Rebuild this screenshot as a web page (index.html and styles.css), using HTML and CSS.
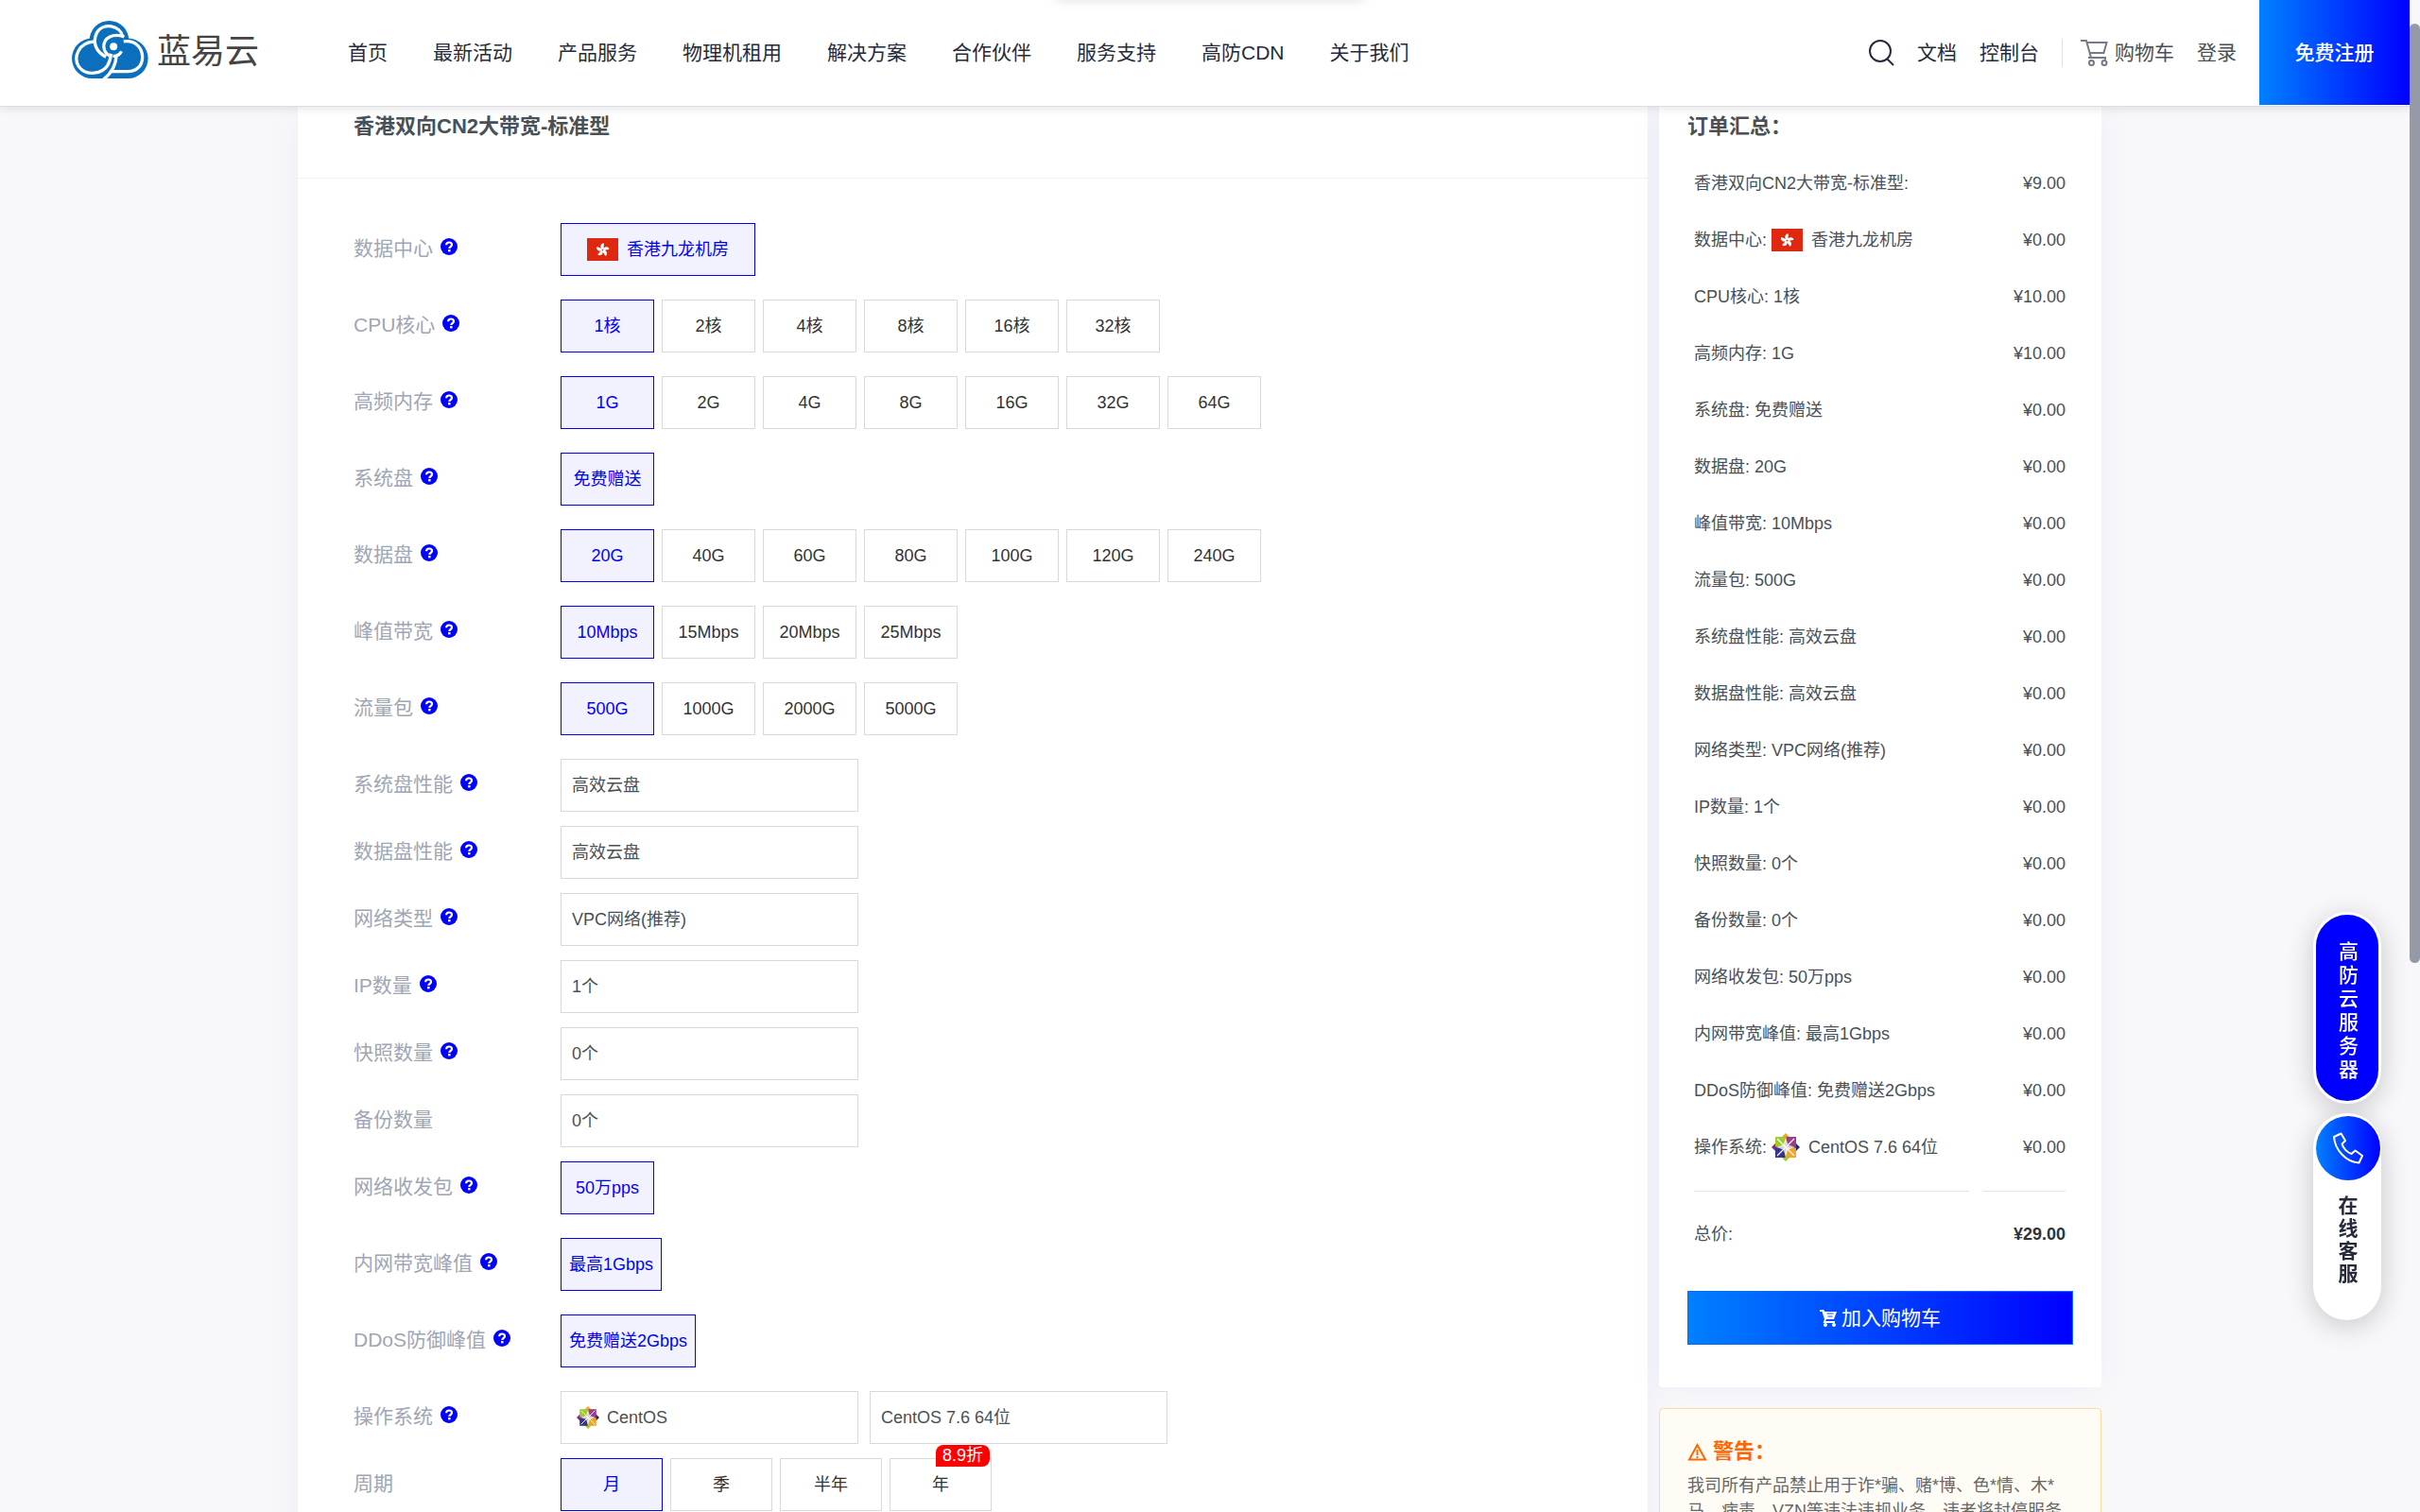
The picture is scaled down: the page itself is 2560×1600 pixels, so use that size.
FILE: index.html
```html
<!DOCTYPE html>
<html lang="zh-CN">
<head>
<meta charset="utf-8">
<title>香港双向CN2大带宽-标准型 - 蓝易云</title>
<link rel="stylesheet" href="styles.css">
</head>
<body>
<svg class="sprite" aria-hidden="true">
  <symbol id="help" viewBox="0 0 18 18">
    <circle cx="9" cy="9" r="9" fill="#0000ff"/>
    <path d="M6.100 7.300C6.100 5.300 7.300 4.500 9 4.500s3 .9 3 2.500c0 2-2.700 2-2.700 4" fill="none" stroke="#fff" stroke-width="2.200"/>
    <rect x="8.100" y="12" width="2.400" height="2.400" fill="#fff"/>
  </symbol>
  <symbol id="flag" viewBox="0 0 33 24">
    <rect width="33" height="24" fill="#de2910"/>
    <g fill="#fff" transform="translate(16.500 12.500)">
      <path id="petal" d="M0-.5C-3-2-3-6 .8-7.200C2.400-5.500 .4-4.500 1.400-2.500C1.600-1.500 1-.8 0-.5Z"/>
      <use href="#petal" transform="rotate(72)"/>
      <use href="#petal" transform="rotate(144)"/>
      <use href="#petal" transform="rotate(216)"/>
      <use href="#petal" transform="rotate(288)"/>
    </g>
  </symbol>
  <symbol id="centos" viewBox="0 0 30 30">
    <path d="M15 0l4 4v11h-8V4z" fill="#efa724"/>
    <path d="M30 15l-4 4H15v-8h11z" fill="#262577"/>
    <path d="M15 30l-4-4V15h8v11z" fill="#9ccd2a"/>
    <path d="M0 15l4-4h11v8H4z" fill="#932279"/>
    <path d="M4 4h10.500v10.500H4z" fill="#9ccd2a"/>
    <path d="M15.500 4H26v10.500H15.500z" fill="#a03a8c"/>
    <path d="M4 15.500h10.500V26H4z" fill="#35348a"/>
    <path d="M15.500 15.500H26V26H15.500z" fill="#efa724"/>
    <path d="M6 6l18 18M24 6L6 24" stroke="#fff" stroke-width="1.200"/>
    <path d="M15 5l2.500 7.500L25 15l-7.500 2.500L15 25l-2.500-7.500L5 15l7.500-2.500z" fill="#fff" opacity=".75"/>
  </symbol>
</svg>

<header class="header">
  <a class="logo" href="#">
    <svg width="81" height="61" viewBox="48 35 244 184" aria-hidden="true">
      <g fill="#0b6fbe">
        <circle cx="167" cy="98" r="63"/>
        <circle cx="112" cy="155" r="64"/>
        <circle cx="227" cy="155" r="64"/>
        <path d="M112 110h115v109H112z"/>
      </g>
      <g fill="none" stroke="#fff" stroke-width="10">
        <path d="M210 86C203 50 148 38 127 74c-15 32 0 62 30 76"/>
        <path d="M118 102C72 104 50 150 70 181c24 34 76 22 92-4 8-14 10-24 11-40"/>
        <path d="M213 101c40-6 60 24 60 50 0 30-22 46-46 46h-58"/>
        <path d="M215 86c-35-12-66 2-65 32 1 13 7 22 17 28"/>
        <path d="M206 132c-6 12-14 16-27 16M190 146c-2 34-16 56-41 76"/>
      </g>
      <circle cx="181" cy="117" r="25" fill="#0b6fbe"/>
      <circle cx="181" cy="117" r="12" fill="#fff"/>
    </svg>
    <span>蓝易云</span>
  </a>
  <nav class="nav">
    <a href="#">首页</a><a href="#">最新活动</a><a href="#">产品服务</a><a href="#">物理机租用</a><a href="#">解决方案</a><a href="#">合作伙伴</a><a href="#">服务支持</a><a href="#">高防CDN</a><a href="#">关于我们</a>
  </nav>
  <div class="tools">
    <button class="search" type="button" aria-label="搜索">
      <svg width="27" height="28" viewBox="0 0 27 28" fill="none" stroke="#252b3a" stroke-width="2"><circle cx="12" cy="12" r="11"/><path d="M19.500 20.500l6.500 6.500"/></svg>
    </button>
    <a href="#">文档</a>
    <a href="#">控制台</a>
  </div>
  <div class="account">
    <a class="cart" href="#">
      <svg width="29" height="29" viewBox="0 0 29 29" fill="none" stroke="#757a85" stroke-width="2"><path d="M0 2h6l5 18h15M7 4h20.500l-3 11H10M8 20h18v2"/><circle cx="11.500" cy="25.500" r="2.500"/><circle cx="25" cy="25.500" r="2.500"/></svg>
      购物车
    </a>
    <a href="#">登录</a>
  </div>
  <a class="register" href="#">免费注册</a>
</header>

<main class="layout">
  <section class="config">
    <h1 class="heading config-head">香港双向CN2大带宽-标准型</h1>
    <form class="form">
      <div class="row" role="radiogroup" aria-label="数据中心">
        <span class="name">数据中心<svg class="help"><use href="#help"/></svg></span>
        <div class="options">
          <label class="opt opt-site"><input type="radio" name="dc" checked><svg class="flag"><use href="#flag"/></svg>香港九龙机房</label>
        </div>
      </div>
      <div class="row" role="radiogroup" aria-label="CPU核心">
        <span class="name">CPU核心<svg class="help"><use href="#help"/></svg></span>
        <div class="options">
          <label class="opt"><input type="radio" name="cpu" checked>1核</label>
          <label class="opt"><input type="radio" name="cpu">2核</label>
          <label class="opt"><input type="radio" name="cpu">4核</label>
          <label class="opt"><input type="radio" name="cpu">8核</label>
          <label class="opt"><input type="radio" name="cpu">16核</label>
          <label class="opt"><input type="radio" name="cpu">32核</label>
        </div>
      </div>
      <div class="row" role="radiogroup" aria-label="高频内存">
        <span class="name">高频内存<svg class="help"><use href="#help"/></svg></span>
        <div class="options">
          <label class="opt"><input type="radio" name="mem" checked>1G</label>
          <label class="opt"><input type="radio" name="mem">2G</label>
          <label class="opt"><input type="radio" name="mem">4G</label>
          <label class="opt"><input type="radio" name="mem">8G</label>
          <label class="opt"><input type="radio" name="mem">16G</label>
          <label class="opt"><input type="radio" name="mem">32G</label>
          <label class="opt"><input type="radio" name="mem">64G</label>
        </div>
      </div>
      <div class="row" role="radiogroup" aria-label="系统盘">
        <span class="name">系统盘<svg class="help"><use href="#help"/></svg></span>
        <div class="options">
          <label class="opt"><input type="radio" name="sys" checked>免费赠送</label>
        </div>
      </div>
      <div class="row" role="radiogroup" aria-label="数据盘">
        <span class="name">数据盘<svg class="help"><use href="#help"/></svg></span>
        <div class="options">
          <label class="opt"><input type="radio" name="disk" checked>20G</label>
          <label class="opt"><input type="radio" name="disk">40G</label>
          <label class="opt"><input type="radio" name="disk">60G</label>
          <label class="opt"><input type="radio" name="disk">80G</label>
          <label class="opt"><input type="radio" name="disk">100G</label>
          <label class="opt"><input type="radio" name="disk">120G</label>
          <label class="opt"><input type="radio" name="disk">240G</label>
        </div>
      </div>
      <div class="row" role="radiogroup" aria-label="峰值带宽">
        <span class="name">峰值带宽<svg class="help"><use href="#help"/></svg></span>
        <div class="options">
          <label class="opt"><input type="radio" name="bw" checked>10Mbps</label>
          <label class="opt"><input type="radio" name="bw">15Mbps</label>
          <label class="opt"><input type="radio" name="bw">20Mbps</label>
          <label class="opt"><input type="radio" name="bw">25Mbps</label>
        </div>
      </div>
      <div class="row" role="radiogroup" aria-label="流量包">
        <span class="name">流量包<svg class="help"><use href="#help"/></svg></span>
        <div class="options">
          <label class="opt"><input type="radio" name="flow" checked>500G</label>
          <label class="opt"><input type="radio" name="flow">1000G</label>
          <label class="opt"><input type="radio" name="flow">2000G</label>
          <label class="opt"><input type="radio" name="flow">5000G</label>
        </div>
      </div>
      <div class="row row-select">
        <label class="name" for="sysperf">系统盘性能<svg class="help"><use href="#help"/></svg></label>
        <select id="sysperf" class="select"><option>高效云盘</option></select>
      </div>
      <div class="row row-select">
        <label class="name" for="diskperf">数据盘性能<svg class="help"><use href="#help"/></svg></label>
        <select id="diskperf" class="select"><option>高效云盘</option></select>
      </div>
      <div class="row row-select">
        <label class="name" for="net">网络类型<svg class="help"><use href="#help"/></svg></label>
        <select id="net" class="select"><option>VPC网络(推荐)</option></select>
      </div>
      <div class="row row-select">
        <label class="name" for="ip">IP数量<svg class="help"><use href="#help"/></svg></label>
        <select id="ip" class="select"><option>1个</option></select>
      </div>
      <div class="row row-select">
        <label class="name" for="snap">快照数量<svg class="help"><use href="#help"/></svg></label>
        <select id="snap" class="select"><option>0个</option></select>
      </div>
      <div class="row row-select">
        <label class="name" for="backup">备份数量</label>
        <select id="backup" class="select"><option>0个</option></select>
      </div>
      <div class="row" role="radiogroup" aria-label="网络收发包">
        <span class="name">网络收发包<svg class="help"><use href="#help"/></svg></span>
        <div class="options">
          <label class="opt"><input type="radio" name="pps" checked>50万pps</label>
        </div>
      </div>
      <div class="row" role="radiogroup" aria-label="内网带宽峰值">
        <span class="name">内网带宽峰值<svg class="help"><use href="#help"/></svg></span>
        <div class="options">
          <label class="opt"><input type="radio" name="lan" checked>最高1Gbps</label>
        </div>
      </div>
      <div class="row" role="radiogroup" aria-label="DDoS防御峰值">
        <span class="name">DDoS防御峰值<svg class="help"><use href="#help"/></svg></span>
        <div class="options">
          <label class="opt"><input type="radio" name="ddos" checked>免费赠送2Gbps</label>
        </div>
      </div>
      <div class="row row-select">
        <label class="name" for="os">操作系统<svg class="help"><use href="#help"/></svg></label>
        <div class="os">
          <div class="os-family">
            <svg class="os-icon"><use href="#centos"/></svg>
            <select id="os" class="select"><option>CentOS</option></select>
          </div>
          <select class="select" aria-label="系统版本"><option>CentOS 7.6 64位</option></select>
        </div>
      </div>
      <div class="row" role="radiogroup" aria-label="周期">
        <span class="name">周期</span>
        <div class="options">
          <label class="opt opt-cycle"><input type="radio" name="cycle" checked>月</label>
          <label class="opt opt-cycle"><input type="radio" name="cycle">季</label>
          <label class="opt opt-cycle"><input type="radio" name="cycle">半年</label>
          <label class="opt opt-cycle"><input type="radio" name="cycle">年<span class="badge">8.9折</span></label>
        </div>
      </div>
    </form>
  </section>

  <aside class="side">
    <section class="summary">
      <h2 class="heading">订单汇总：</h2>
      <div class="table-wrap">
        <table class="bill">
          <tbody>
            <tr><td>香港双向CN2大带宽-标准型:</td><td>¥9.00</td></tr>
            <tr><td><span class="with-icon">数据中心: <svg class="flag"><use href="#flag"/></svg>香港九龙机房</span></td><td>¥0.00</td></tr>
            <tr><td>CPU核心: 1核</td><td>¥10.00</td></tr>
            <tr><td>高频内存: 1G</td><td>¥10.00</td></tr>
            <tr><td>系统盘: 免费赠送</td><td>¥0.00</td></tr>
            <tr><td>数据盘: 20G</td><td>¥0.00</td></tr>
            <tr><td>峰值带宽: 10Mbps</td><td>¥0.00</td></tr>
            <tr><td>流量包: 500G</td><td>¥0.00</td></tr>
            <tr><td>系统盘性能: 高效云盘</td><td>¥0.00</td></tr>
            <tr><td>数据盘性能: 高效云盘</td><td>¥0.00</td></tr>
            <tr><td>网络类型: VPC网络(推荐)</td><td>¥0.00</td></tr>
            <tr><td>IP数量: 1个</td><td>¥0.00</td></tr>
            <tr><td>快照数量: 0个</td><td>¥0.00</td></tr>
            <tr><td>备份数量: 0个</td><td>¥0.00</td></tr>
            <tr><td>网络收发包: 50万pps</td><td>¥0.00</td></tr>
            <tr><td>内网带宽峰值: 最高1Gbps</td><td>¥0.00</td></tr>
            <tr><td>DDoS防御峰值: 免费赠送2Gbps</td><td>¥0.00</td></tr>
            <tr><td><span class="with-icon">操作系统: <svg class="centos"><use href="#centos"/></svg>CentOS 7.6 64位</span></td><td>¥0.00</td></tr>
          </tbody>
          <tfoot>
            <tr><td><div class="total">总价:</div></td><td><div class="total sum">¥29.00</div></td></tr>
          </tfoot>
        </table>
      </div>
      <button class="add" type="button">
        <svg width="18" height="18" viewBox="0 0 18 18" fill="#fff" aria-hidden="true"><path d="M0 0h4l1.500 2H18l-3 8H7l-1 2h10v2H3.500l1.500-4L2.500 2H0z"/><circle cx="6" cy="16" r="2"/><circle cx="15" cy="16" r="2"/><path d="M7.500 4h7M8.500 7h5" stroke="#2040ff" stroke-width="1"/></svg>
        加入购物车
      </button>
    </section>
    <section class="warning">
      <h2 class="heading">
        <svg width="21" height="19" viewBox="0 0 21 19" fill="none" stroke="#ff6600" stroke-width="2" aria-hidden="true"><path d="M10.500 2L19 17.500H2zM10.500 7v6M10.500 14v2"/></svg>
        警告：
      </h2>
      <p>我司所有产品禁止用于诈*骗、赌*博、色*情、木*马、病毒、VZN等违法违规业务，违者将封停服务</p>
    </section>
  </aside>
</main>

<div class="floating">
  <a class="float-server" href="#">高防云服务器</a>
  <a class="float-chat" href="#">
    <span class="phone"><svg width="32" height="34" viewBox="0 0 32 34" fill="none" stroke="#fff" stroke-width="2" stroke-linejoin="round"><path d="M1 5L8.500 1.500L13 9L9.500 12.500C10.500 17 15 21.500 19.500 23L23.500 19.500L31 25L27.500 32.500C14 32 2 19 1 5Z"/></svg></span>
    <span class="chat-text">在线客服</span>
  </a>
</div>
<div class="peek"></div>
<div class="scrollbar"><div class="thumb"></div></div>
</body>
</html>
```
FILE: styles.css
```css
* { box-sizing: border-box; }
body {
  margin: 0;
  padding-right: 11px;
  height: 100vh;
  overflow: hidden;
  background: #f8f8fb;
  color: #495057;
  font: 18px/27px "Liberation Sans", "Noto Sans CJK SC", sans-serif;
}
a { color: inherit; text-decoration: none; }
button, select { font: inherit; color: inherit; }
.sprite { position: absolute; width: 0; height: 0; }

.header {
  position: relative;
  z-index: 5;
  display: flex;
  align-items: center;
  height: 113px;
  padding: 0 0 1px 76px;
  background: #fff;
  border-bottom: 1px solid #dcdde3;
  box-shadow: 0 2px 10px rgba(0, 0, 0, .1);
  color: #252b3a;
  font-size: 21px;
  line-height: 30px;
  white-space: nowrap;
}
.logo { display: flex; align-items: center; gap: 9px; margin-bottom: 6px; }
.logo span { padding-top: 4px; font-size: 36px; line-height: 48px; color: #444; }
.nav { display: flex; gap: 48px; margin-left: 94px; }
.tools { display: flex; align-items: center; gap: 24px; margin-left: auto; }
.search { display: flex; padding: 0; border: 0; background: none; }
.account {
  display: flex;
  align-items: center;
  gap: 24px;
  margin: 0 24px;
  padding-left: 19px;
  border-left: 1px solid #dfe1e6;
  color: #495057;
}
.cart { display: flex; align-items: center; gap: 7px; }
.register {
  align-self: stretch;
  display: flex;
  align-items: center;
  justify-content: center;
  width: 159px;
  background: linear-gradient(90deg, #0080ff, #0000ff);
  color: #fff;
  font-weight: 500;
}

.layout {
  display: flex;
  align-items: flex-start;
  gap: 12px;
  max-width: 1919px;
  margin: 0 auto;
  padding-right: 11px;
}
.heading { margin: 0; font-size: 22px; line-height: 30px; font-weight: 700; }
.config {
  flex: 1;
  background: #fff;
  box-shadow: 0 0 36px rgba(18, 38, 163, .05);
}
.config-head { padding: 6px 59px 39px; border-bottom: 1px solid #f2f2f7; }
.form { padding: 47px 59px; }
.row { display: flex; margin-bottom: 25px; line-height: 54px; }
.row-select { margin-bottom: 15px; }
.name {
  display: flex;
  align-items: center;
  gap: 8px;
  width: 219px;
  flex: none;
  height: 54px;
  font-size: 21px;
  color: #a0a6b4;
}
.help { width: 18px; height: 18px; margin-bottom: 5px; }
.options { display: flex; gap: 8px; }
.opt {
  position: relative;
  display: flex;
  align-items: center;
  justify-content: center;
  min-width: 99px;
  height: 56px;
  padding: 0 8px;
  border: 1px solid #d9d9d9;
  color: #333;
}
.opt input { position: absolute; inset: 0; margin: 0; opacity: 0; }
.opt:has(input:checked) { border-color: #0000ff; background: #f2f2ff; color: #0000ff; }
.opt-site { padding: 0 27px; gap: 9px; }
.opt-cycle { min-width: 108px; }
.flag { width: 33px; height: 24px; flex: none; }
.badge {
  position: absolute;
  top: -15px;
  right: 1px;
  padding: 0 7px;
  border-radius: 8px 8px 8px 0;
  background: #ff0000;
  color: #fff;
  line-height: 23px;
}
.select {
  appearance: none;
  width: 315px;
  height: 56px;
  padding: 0 11px;
  border: 1px solid #d9d9d9;
  border-radius: 0;
  background: #fff;
}
.os { display: flex; gap: 12px; }
.os-family { position: relative; display: flex; }
.os-family .select { padding-left: 48px; }
.os-icon { position: absolute; left: 17px; top: 16px; width: 24px; height: 24px; }

.side { width: 468px; flex: none; }
.summary {
  padding: 6px 30px 45px;
  border-radius: 0 0 4px 4px;
  background: #fff;
  box-shadow: 0 0 36px rgba(18, 38, 163, .05);
}
.table-wrap { padding: 15px 8px 15px 7px; }
.bill { width: 100%; border-collapse: collapse; }
.bill td { height: 60px; padding: 0 15px 0 0; white-space: nowrap; }
.bill td:last-child { width: 87px; padding: 0; text-align: right; }
.with-icon { display: flex; align-items: center; gap: 9px; }
.with-icon svg { margin-left: -4px; }
.centos { width: 30px; height: 30px; }
.total { margin-top: 16px; border-top: 1px solid #e4e5e9; line-height: 90px; }
.sum { font-weight: 700; color: #2f3439; }
.add {
  display: flex;
  align-items: center;
  justify-content: center;
  gap: 5px;
  width: 100%;
  height: 57px;
  border: 1px solid #0a6cff;
  background: linear-gradient(90deg, #0080ff, #0000ff);
  color: #fff;
  font-size: 21px;
}
.warning {
  margin-top: 22px;
  padding: 30px 29px;
  border: 1px solid #fbdc9d;
  border-radius: 4px;
  background: #fffcf5;
  color: #666;
}
.warning .heading { display: flex; align-items: center; gap: 6px; color: #ff6600; }
.warning p { margin: 8px 0 0; }

.floating {
  position: fixed;
  z-index: 6;
  right: 41px;
  top: 965px;
  display: flex;
  flex-direction: column;
  gap: 10px;
  width: 72px;
  font-size: 21px;
  font-weight: 500;
}
.float-server, .float-chat {
  display: flex;
  align-items: center;
  border-radius: 36px;
  box-shadow: 0 6px 30px rgba(0, 0, 0, .2);
}
.float-server {
  height: 203px;
  border: 3px solid #fff;
  background: #0000ff;
  color: #fff;
  line-height: 25px;
  padding: 5px 21px 0 24px;
}
.float-chat {
  flex-direction: column;
  gap: 15px;
  height: 219px;
  padding: 3px 0 0 2px;
  background: #fff;
  color: #252b3a;
}
.phone {
  display: flex;
  align-items: center;
  justify-content: center;
  width: 68px;
  height: 68px;
  border-radius: 50%;
  background: linear-gradient(90deg, #0080ff, #0000ff);
}
.chat-text { width: 21px; line-height: 24px; font-weight: 700; }

.peek {
  position: fixed;
  z-index: 7;
  top: -40px;
  left: 50%;
  width: 324px;
  height: 39px;
  margin-left: -162px;
  box-shadow: 0 0 12px rgba(0, 0, 0, .15);
}
.scrollbar { position: fixed; z-index: 8; inset: 0 0 0 auto; width: 11px; padding-top: 25px; background: #f8f8fb; }
.thumb { height: 994px; border-radius: 6px; background: #969aa6; }
```
